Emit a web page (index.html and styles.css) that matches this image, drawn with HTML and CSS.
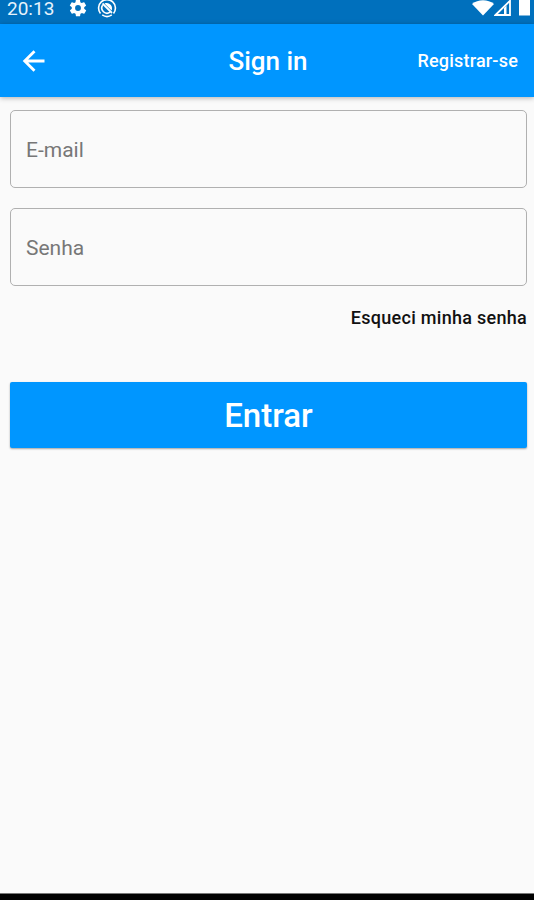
FILE: index.html
```html
<!DOCTYPE html>
<html lang="pt-BR">
<head>
    <meta charset="UTF-8">
    <meta name="viewport" content="width=device-width, initial-scale=1.0">
    <title>Sign in</title>
    <link rel="stylesheet" href="styles.css">
</head>
<body>
    <div class="screen">
        <div class="status-bar">
            <span class="clock">20:13</span>
            <svg class="gear" width="20" height="20" viewBox="0 0 24 24" fill="#fff">
                <path d="M19.4 13c.1-.3.1-.7.1-1s0-.7-.1-1l2.100-1.600c.2-.2.2-.4.1-.6l-2-3.500c-.1-.2-.4-.3-.6-.2l-2.500 1c-.5-.4-1.100-.7-1.700-1l-.4-2.600c0-.3-.2-.4-.5-.4h-4c-.2 0-.4.2-.5.4l-.4 2.600c-.6.3-1.100.6-1.700 1l-2.400-1c-.2-.1-.5 0-.6.2l-2 3.500c-.1.2-.1.5.1.6L4.600 11c-.1.300-.1.700-.1 1s0 .7.1 1l-2.100 1.600c-.2.2-.2.4-.1.6l2 3.500c.1.2.4.3.6.2l2.400-1c.5.4 1.100.7 1.700 1l.4 2.600c0 .3.2.4.5.4h4c.2 0 .5-.2.5-.4l.4-2.600c.6-.3 1.200-.6 1.700-1l2.500 1c.2.1.5 0 .6-.2l2-3.500c.1-.2.1-.5-.1-.6zM12 15.500a3.500 3.500 0 1 1 0-7 3.500 3.500 0 0 1 0 7z"/>
            </svg>
            <svg class="sync" width="20" height="20" viewBox="0 0 20 20" fill="none" stroke="#fff" stroke-width="1.600">
                <path d="M3.500 15.400A8.400 8.400 0 1 1 16.500 15.400M5.200 16.900a8.400 8.400 0 0 0 9.600 0"/>
                <path d="M5.600 7.200A5.200 5.200 0 0 0 13 14.200"/>
                <path d="M5.500 5.500l9.500 9.500" stroke-width="1.800"/>
                <path d="M7.500 5.400C12 3.500 16.500 8 14.600 12.500z" fill="#fff" stroke="none"/>
            </svg>
            <div class="signals">
                <svg width="22" height="24" viewBox="0 0 22 24" fill="#fff">
                    <path d="M0 4C6-1 16-1 22 4L11 15.500z"/>
                </svg>
                <svg width="18" height="24" viewBox="0 0 18 24">
                    <path d="M1.500 15L16 .8V15z" fill="none" stroke="#fff" stroke-width="1.800"/>
                    <path d="M10 14.500V8l2.500-2.500v9z" fill="#fff"/>
                </svg>
                <svg width="11" height="24" viewBox="0 0 11 24" fill="#fff">
                    <path d="M0 0h11v15.500H0z"/>
                </svg>
            </div>
        </div>

        <header class="app-bar">
            <a class="back" href="#" aria-label="Voltar">
                <svg width="24" height="24" viewBox="0 0 24 24" fill="none" stroke="#fff" stroke-width="2.800">
                    <path d="M22.500 12H3M12.500 2.200L2.700 12l9.800 9.800"/>
                </svg>
            </a>
            <h1>Sign in</h1>
            <a class="register" href="#">Registrar-se</a>
        </header>

        <form class="login">
            <label class="field">
                <span>E-mail</span>
                <input type="email">
            </label>
            <label class="field">
                <span>Senha</span>
                <input type="password">
            </label>
            <a class="forgot" href="#">Esqueci minha senha</a>
            <button type="button" class="submit">Entrar</button>
        </form>

        <div class="nav-bar"></div>
    </div>
</body>
</html>
```

FILE: styles.css
```css
* {
    box-sizing: border-box;
}

body {
    margin: 0;
    font-family: Roboto, "Liberation Sans", sans-serif;
    background-color: #fafafa;
}

a {
    color: inherit;
    text-decoration: none;
}

.screen {
    display: flex;
    flex-direction: column;
    height: 900px;
    overflow: hidden;
}

.status-bar {
    display: flex;
    align-items: flex-start;
    height: 24px;
    padding: 0 4px 0 7px;
    background-color: #0070bd;
    color: #e6f3fc;
}

.clock {
    width: 61px;
    font-size: 19px;
    line-height: 18px;
}

.gear {
    margin-top: -2px;
}

.sync {
    margin: -2px 0 0 9px;
}

.signals {
    display: flex;
    margin-left: auto;
}

.signals svg:last-child {
    margin-left: 7px;
}

.app-bar {
    display: grid;
    grid-template-columns: 1fr auto 1fr;
    align-items: center;
    height: 73px;
    padding: 0 20px 0 22px;
    background-color: #0096ff;
    color: #fff;
    box-shadow: 0 1px 5px rgba(0, 0, 0, 0.3);
}

.back {
    display: flex;
}

.app-bar h1 {
    margin: 0;
    font-size: 26px;
    font-weight: 500;
}

.register {
    justify-self: end;
    margin-right: -4px;
    font-size: 18px;
    font-weight: 500;
    letter-spacing: 0.2px;
}

.login {
    display: flex;
    flex-direction: column;
    flex: 1;
    padding: 13px 7px 0 10px;
}

.field {
    display: flex;
    align-items: center;
    height: 78px;
    margin-bottom: 20px;
    padding: 2px 15px 0;
    border: 1px solid #b0b0b0;
    border-radius: 5px;
    color: #777;
    font-size: 21px;
}

.field input {
    flex: 1;
    min-width: 0;
    border: none;
    outline: none;
    background: none;
    font: inherit;
}

.forgot {
    align-self: flex-end;
    color: #111;
    font-size: 18px;
    font-weight: 500;
    line-height: 24px;
    letter-spacing: 0.28px;
}

.submit {
    height: 66px;
    margin-top: 52px;
    padding: 0;
    border: none;
    border-radius: 2px;
    background-color: #0096ff;
    color: #fff;
    font-family: inherit;
    font-size: 33px;
    font-weight: 500;
    box-shadow: 0 1px 2px rgba(0, 0, 0, 0.35);
}

.nav-bar {
    height: 7px;
    border-top: 1px solid #777;
    background-color: #000;
}
```
